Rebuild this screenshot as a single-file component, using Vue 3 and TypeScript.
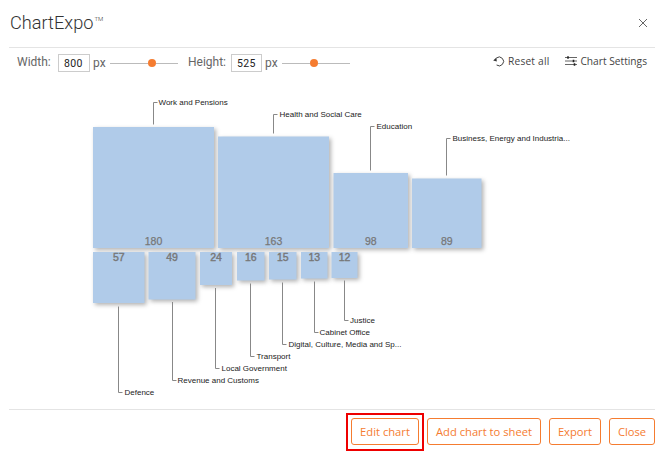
<script setup lang="ts">
interface Node { x: number; y: number; w: number; h: number; v: number; up: boolean }
interface Leader { x: number; y1: number; y2: number; tx: number; label: string }

const nodes: Node[] = [
  { x: 93, y: 127, w: 121, h: 121, v: 180, up: true },
  { x: 218, y: 136.5, w: 111, h: 111.5, v: 163, up: true },
  { x: 333.5, y: 173, w: 74.5, h: 75, v: 98, up: true },
  { x: 412, y: 178.5, w: 69.5, h: 69.5, v: 89, up: true },
  { x: 93, y: 252, w: 51.5, h: 51, v: 57, up: false },
  { x: 148.5, y: 252, w: 47, h: 47.5, v: 49, up: false },
  { x: 200, y: 252, w: 32, h: 33, v: 24, up: false },
  { x: 237, y: 252, w: 27.5, h: 28.5, v: 16, up: false },
  { x: 269, y: 252, w: 27.5, h: 27.5, v: 15, up: false },
  { x: 301, y: 252, w: 26.5, h: 26.5, v: 13, up: false },
  { x: 331.5, y: 252, w: 26, h: 26, v: 12, up: false },
]

const leaders: Leader[] = [
  { x: 153.5, y1: 124.5, y2: 102.5, tx: 158.5, label: 'Work and Pensions' },
  { x: 273.5, y1: 133.5, y2: 114.5, tx: 279.5, label: 'Health and Social Care' },
  { x: 370.5, y1: 170.5, y2: 126.5, tx: 376.5, label: 'Education' },
  { x: 446.5, y1: 175.5, y2: 138.5, tx: 452.5, label: 'Business, Energy and Industria...' },
  { x: 118.5, y1: 306.5, y2: 392.5, tx: 124.5, label: 'Defence' },
  { x: 172.5, y1: 302, y2: 380.5, tx: 177.5, label: 'Revenue and Customs' },
  { x: 215.5, y1: 288, y2: 368.5, tx: 221.5, label: 'Local Government' },
  { x: 250.5, y1: 283.5, y2: 356.5, tx: 256.5, label: 'Transport' },
  { x: 282.5, y1: 282.5, y2: 344.5, tx: 288.5, label: 'Digital, Culture, Media and Sp...' },
  { x: 314.5, y1: 281.5, y2: 332.5, tx: 319.5, label: 'Cabinet Office' },
  { x: 344.5, y1: 280.5, y2: 320.5, tx: 350, label: 'Justice' },
]

const leaderPath = (l: Leader): string => `M${l.x} ${l.y1}V${l.y2}H${l.x + 4}`
const valueY = (n: Node): number => (n.up ? n.y + n.h - 3.5 : n.y + 9)
</script>

<template>
  <div class="dialog">
    <header class="head">
      <h1 class="title">ChartExpo<sup class="tm">TM</sup></h1>
      <svg class="close" width="10" height="10" viewBox="0 0 10 10">
        <path d="M1 1L9 9M9 1L1 9" stroke="#666" stroke-width="1" fill="none" />
      </svg>
    </header>

    <div class="toolbar">
      <span class="lbl lbl-w">Width:</span>
      <span class="field f-w">800</span>
      <span class="lbl px">px</span>
      <div class="slider s-w"><i class="track t1"></i><i class="thumb"></i><i class="track"></i></div>
      <span class="lbl lbl-h">Height:</span>
      <span class="field f-h">525</span>
      <span class="lbl px">px</span>
      <div class="slider s-h"><i class="track t2"></i><i class="thumb"></i><i class="track"></i></div>
      <div class="actions">
        <span class="action reset">
          <svg width="12" height="12" viewBox="0 0 12 12">
            <path d="M3.4 3A4.4 4.4 0 1 1 3.6 10" stroke="#444" stroke-width="1" fill="none" />
            <path d="M0.2 5.6L3.4 2.6L3.8 6.4Z" fill="#333" />
          </svg>
          Reset all
        </span>
        <span class="action">
          <svg width="12" height="12" viewBox="0 0 12 12">
            <path d="M0 2.5H12M0 6H12M0 9.5H12" stroke="#666" stroke-width="1" fill="none" />
            <path d="M3 1.2V3.8M8.5 4.7V7.3M9.5 8.2V10.8" stroke="#222" stroke-width="1.6" fill="none" />
          </svg>
          Chart Settings
        </span>
      </div>
    </div>

    <div class="chart">
      <svg width="671" height="330" viewBox="0 80 671 330" class="plot">
        <g v-for="n in nodes" :key="n.v">
          <rect class="box" :x="n.x" :y="n.y" :width="n.w" :height="n.h" />
          <text class="val" :class="{ low: !n.up }" :x="n.x + n.w / 2" :y="valueY(n)">{{ n.v }}</text>
        </g>
        <g v-for="l in leaders" :key="l.label">
          <path class="lead" :d="leaderPath(l)" />
          <text class="name" :x="l.tx" :y="l.y2 + 2.5">{{ l.label }}</text>
        </g>
      </svg>
    </div>

    <footer class="foot">
      <button class="btn edit" type="button">Edit chart</button>
      <button class="btn add" type="button">Add chart to sheet</button>
      <button class="btn export" type="button">Export</button>
      <button class="btn shut" type="button">Close</button>
    </footer>
  </div>
</template>

<style scoped>
.dialog {
  width: 671px;
  height: 469px;
  box-sizing: border-box;
  padding: 0 16px 0 9px;
  display: flex;
  flex-direction: column;
  background: #fff;
  overflow: hidden;
  font-family: "Open Sans", sans-serif;
}
.head {
  height: 48px;
  flex: none;
  box-sizing: border-box;
  border-bottom: 1px solid #e4e4e4;
  display: flex;
  align-items: center;
  justify-content: space-between;
  padding: 0 7px 0 1px;
}
.title {
  margin: 0;
  font-family: Roboto, sans-serif;
  font-weight: 300;
  font-size: 18.2px;
  color: #333;
  line-height: 1;
}
.tm {
  font-size: 6px;
  vertical-align: 8px;
  line-height: 0;
  margin-left: 1px;
}
.close { margin-bottom: 1px; }
.toolbar {
  height: 30px;
  flex: none;
  display: flex;
  align-items: center;
  padding-left: 8px;
}
.lbl {
  font-family: Roboto, sans-serif;
  font-size: 12px;
  color: #666;
}
.lbl-w { width: 41px; margin-top: -2px; }
.lbl-h { width: 43px; margin-top: -2px; }
.px { width: 17px; margin-left: 3px; margin-top: -1px; }
.field {
  width: 32px;
  height: 18px;
  box-sizing: border-box;
  border: 1px solid #ccc;
  font-family: Roboto, sans-serif;
  font-size: 10.5px;
  font-weight: 400;
  letter-spacing: 0.3px;
  color: #222;
  line-height: 18px;
  padding-left: 5px;
}
.f-h { width: 31px; }
.slider {
  width: 68px;
  display: flex;
  align-items: center;
}
.s-w { margin-right: 10px; }
.track {
  flex: 1;
  height: 1px;
  background: #bbb;
}
.t1 { flex: none; width: 38px; }
.t2 { flex: none; width: 28px; }
.thumb {
  width: 8px;
  height: 8px;
  flex: none;
  border-radius: 50%;
  background: #f57c30;
}
.actions {
  margin-left: auto;
  margin-right: 8px;
  display: flex;
  gap: 16px;
}
.action {
  display: flex;
  align-items: center;
  gap: 3px;
  font-size: 10.2px;
  color: #444;
  margin-top: -4px;
}
.reset { letter-spacing: 0.2px; }
.chart {
  flex: 1;
  margin: 2px -16px 0 -9px;
  min-height: 0;
}
.plot { display: block; }
.box {
  fill: #b0cbe9;
  filter: drop-shadow(2px 2px 2px rgba(0, 0, 0, 0.3));
}
.val {
  font-family: "Liberation Sans", sans-serif;
  font-size: 10.5px;
  fill: #777;
  stroke: #777;
  stroke-width: 0.25px;
  text-anchor: middle;
}
.low { font-weight: 400; stroke-width: 0.4px; }
.lead {
  fill: none;
  stroke: #888;
  stroke-width: 1;
}
.name {
  font-family: "Liberation Sans", sans-serif;
  font-size: 8px;
  fill: #222;
}
.foot {
  height: 60px;
  flex: none;
  box-sizing: border-box;
  border-top: 1px solid #e4e4e4;
  display: flex;
  justify-content: flex-end;
  gap: 8px;
  padding-top: 8px;
}
.btn {
  position: relative;
  height: 27px;
  box-sizing: border-box;
  border: 1px solid #f57c30;
  border-radius: 3px;
  background: #fff;
  color: #f57c30;
  font-family: "Open Sans", sans-serif;
  font-size: 11.2px;
  padding: 0;
}
.edit { width: 68px; }
.add { width: 114px; }
.export { width: 52px; }
.shut { width: 46px; }
.edit::after {
  content: "";
  position: absolute;
  left: -6px;
  right: -6px;
  top: -6px;
  bottom: -7px;
  border: 2px solid #ee0000;
}
</style>
